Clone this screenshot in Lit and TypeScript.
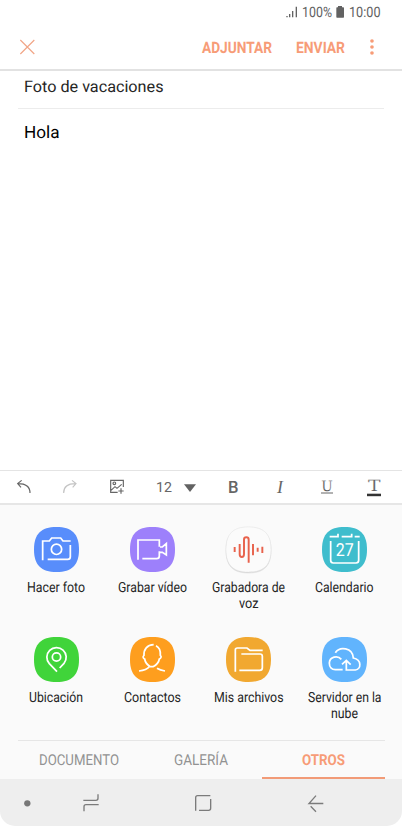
import { LitElement, html, svg, css } from "lit";
import { customElement } from "lit/decorators.js";

// Text set to an exact advance width, which gives the condensed Samsung look.
const fit = (text: string, width: number, size: number, cls = "", baseline = 15) => html`
  <svg class="fit ${cls}" width=${width} height="20">
    <text x="0" y=${baseline} font-size=${size} textLength=${width} lengthAdjust="spacingAndGlyphs">${text}</text>
  </svg>`;

// Line icon drawn on a grid of three units per pixel.
const icon = (box: [number, number, number, number], body: unknown, cls = "") => html`
  <svg class="line ${cls}" width=${box[2] / 3} height=${box[3] / 3} viewBox=${box.join(" ")}>${body}</svg>`;

const SQUIRCLE = "M67.5 0C114 0 135 21 135 67.5S114 135 67.5 135 0 114 0 67.5 21 0 67.5 0Z";

interface App {
  color: string;
  origin: [number, number];
  art: unknown;
  lines: [string, number][];
  cls?: string;
}

const apps: App[] = [
  {
    color: "#588dfb", origin: [100, 37], lines: [["Hacer foto", 58]],
    art: svg`<path d="M126 137V79H146L153 70H180L187 79H210M209 91V126q0 8-8 8H141"/><circle cx="167.500" cy="104" r="15.500"/>`,
  },
  {
    color: "#9d80fb", origin: [390, 37], lines: [["Grabar vídeo", 69]],
    art: svg`<path d="M414 135V76H478V96M478 110V124q0 8-8 8H427M480 97H487L499 87V121L487 113H477"/>`,
  },
  {
    color: "#fbfbfb", origin: [79, 37], lines: [["Grabadora de", 73], ["voz", 19.5]], cls: "voice",
    art: svg`<path d="M105 97V112M120 88V119q0 8 6.500 8t6.500-8V75q0-7 7-7t7 7V144M160 88V122M174 99V111M188 96V115"/>`,
  },
  {
    color: "#3fbdcd", origin: [367, 37], lines: [["Calendario", 58.5]],
    art: svg`<path d="M390 66H415V57M426 66H456V57M465 66H480M393 79V137q0 8 8 8H469q8 0 8-8V79"/>
      <text class="day" x="408" y="125" font-size="54" textLength="54" lengthAdjust="spacingAndGlyphs">27</text>`,
  },
  {
    color: "#40d43a", origin: [100, 34], lines: [["Ubicación", 54]],
    art: svg`<path d="M169 138L146 114A29 29 0 1 1 190 113L177 127"/><circle cx="167.500" cy="94" r="12.500"/>`,
  },
  {
    color: "#fe9e1e", origin: [390, 34], lines: [["Contactos", 57]],
    art: svg`<path d="M461 57C441 58 431 71 432 89C427 93 430 99 434 100C436 112 443 118 449 122C442 131 431 135 417 136M468 60C480 66 482 77 481 89C486 93 482 99 478 100C476 112 467 119 459 123H449M471 128Q480 134 495 136"/>`,
  },
  {
    color: "#f1a830", origin: [78, 34], lines: [["Mis archivos", 69.5]],
    art: svg`<path d="M106 138V73q0-6 6-6H141L150 74H188M124 85H180q7 0 7 7V126q0 8-8 8H118"/>`,
  },
  {
    color: "#61b4fd", origin: [367, 34], lines: [["Servidor en la", 73.5], ["nube", 27]],
    art: svg`<path d="M425 101C414 88 390 93 389 112C389 124 396 132 407 132H429M427 116L440 104L453 117M440 104V133H467C485 131 487 102 461 97C459 65 420 61 407 81"/>`,
  },
];

@customElement("app-root")
export class AppRoot extends LitElement {
  static styles = css`
    :host { display: flex; flex-direction: column; width: 402px; height: 826px; background: #fff;
      font-family: Roboto, "Liberation Sans", sans-serif; overflow: hidden; }
    * { box-sizing: border-box; }
    svg { display: block; flex: none; overflow: visible; }
    text { text-rendering: geometricPrecision; }
    .fit { fill: #252525; }
    .fit.status { fill: #626262; }
    .fit.accent { fill: #f79c77; font-weight: 700; }
    .fit.muted { fill: #929292; }
    .line { fill: none; stroke: #666; stroke-width: 3.5; }
    .statusbar { height: 24px; display: flex; align-items: center; justify-content: flex-end; padding-right: 21.5px; }
    .solid { fill: #626262; stroke: none; }
    .signal { margin-right: 4.5px; }
    .battery { margin: 0 4.5px 0 4px; }
    .header { height: 47px; border-bottom: 2px solid #e2e2e2; display: flex; align-items: center; padding: 1px 27.5px 0 20px; }
    .close { stroke: #f1a586; }
    .send { margin: 0 24.5px 0 24px; }
    .push { margin-left: auto; }
    .dots { fill: #f79c77; stroke: none; }
    .subject { height: 38px; margin: 0 18px; padding: 6px 0 0 6.4px; border-bottom: 1px solid #ececec; }
    .body { flex: 1; padding: 14px 23.6px; }
    .body .fit { fill: #000; }
    .toolbar { height: 35px; display: flex; border-top: 1px solid #e4e4e4; border-bottom: 2px solid #e6e6e6; }
    .tool { width: 47px; display: flex; align-items: center; justify-content: center; }
    .tool.redo { width: 45px; }
    .tool.image { width: 50px; }
    .tool.size { width: 44px; }
    .tool.drop { width: 23.5px; justify-content: flex-start; margin: 0 2px 0 -2px; padding-top: 2px; }
    .faint { stroke: #c4c4c4; }
    .fit.fmt { fill: #666; }
    .bold { font-weight: 500; }
    .serif { font-family: "DejaVu Serif", "Liberation Serif", serif; }
    .serif text { fill: #5c5c5c; stroke: #fff; stroke-width: .15; }
    .ital { font-family: "Liberation Serif", serif; font-style: italic; }
    .panel { height: 274px; background: #fafafa; display: flex; flex-direction: column; }
    .grid { height: 235px; display: grid; grid-template-columns: repeat(4, 1fr); grid-template-rows: 109.5px 1fr; padding: 22px 9.2px 0 7.9px; }
    .app { display: flex; flex-direction: column; align-items: center; }
    .names { display: flex; flex-direction: column; align-items: center; padding-top: 5px; }
    .names .fit { height: 16px; }
    .tile { stroke: none; }
    .art { stroke: #fff; stroke-width: 5.2; }
    .voice .art { stroke: #e8624c; stroke-width: 5.8; }
    .voice .tile { stroke: #e6e6e6; stroke-width: 1.5; filter: drop-shadow(0 2px 1px #ccc); }
    .day { fill: #fff; stroke: none; }
    .tabs { flex: 1; margin: 0 17px 0 18px; border-top: 1px solid #e6e6e6; display: grid; grid-template-columns: 122px 122px 1fr; }
    .tab { display: flex; justify-content: center; align-items: center; border-bottom: 2px solid transparent; padding-top: 1px; }
    .tab.on { border-color: #f29b77; }
    .navwrap { height: 47px; background: #fff; }
    .nav { height: 47px; background: #eee; border-radius: 0 0 15px 15px; display: flex; align-items: center; padding: 1px 0 0 24px; }
    .nav .line { stroke: #7b7b7b; stroke-width: 4; }
    .nav .dot { fill: #777; stroke: none; }
    .recent { margin-left: 52px; }
    .home { margin-left: 96px; }
    .back { margin-left: 96.6px; }
  `;

  render() {
    return html`
      <div class="statusbar">
        ${icon([258, 18, 35, 35], svg`<path d="M259 48h4v4h-4zM267 42h4v10h-4zM276 33h4v19h-4zM287 20h4v32h-4z"/>`, "solid signal")}
        ${fit("100%", 30, 14.3, "status")}
        ${icon([409, 17, 25, 35], svg`<path d="M415 17h12v4h4q2 0 2 2v27q0 2-2 2h-19q-2 0-2-2V23q0-2 2-2h3z"/>`, "solid battery")}
        ${fit("10:00", 31.5, 14.3, "status")}
      </div>
      <div class="header">
        ${icon([60, 120, 44, 42], svg`<path d="M61 120L103 162M103 120L61 162"/>`, "close")}
        <span class="push"></span>
        ${fit("ADJUNTAR", 70, 15.7, "accent", 15.8)}
        ${fit("ENVIAR", 49, 15.7, "accent send", 15.8)}
        ${icon([509, 116, 15, 48], svg`<circle cx="515" cy="122" r="5.500"/><circle cx="515" cy="140" r="5.500"/><circle cx="515" cy="158" r="5.500"/>`, "dots")}
      </div>
      <div class="subject">${fit("Foto de vacaciones", 139.5, 16)}</div>
      <div class="body">${fit("Hola", 35.6, 17, "", 15.4)}</div>
      <div class="toolbar">
        <div class="tool">${icon([50, 46, 42, 40], svg`<path d="M89 85C89 68 80 57 53 57M64 47L52 57L62 68"/>`)}</div>
        <div class="tool redo">${icon([189, 46, 40, 40], svg`<path d="M191 85C191 68 200 57 226 57M216 47L228 57L218 68"/>`, "faint")}</div>
        <div class="tool image">${icon([330, 46, 42, 42], svg`<path d="M370 67V47H332V83H353M333 77L345 66L351 71L365 59M355 79H371M363 71V87"/><circle cx="343" cy="56" r="4"/>`)}</div>
        <div class="tool size">${fit("12", 16, 14, "fmt")}</div>
        <div class="tool drop">${icon([552, 58, 36, 24], svg`<path d="M552 59H588L570 82Z"/>`, "solid")}</div>
        <div class="tool">${fit("B", 10.5, 17, "fmt bold", 15.9)}</div>
        <div class="tool">${fit("I", 6, 18.5, "fmt ital", 16)}</div>
        <div class="tool">
          <svg class="fit fmt serif" width="12" height="20">
            <text x="0.300" y="13.500" font-size="14.500" textLength="11.500" lengthAdjust="spacingAndGlyphs">U</text>
            <rect x="0" y="15.500" width="12" height="1"/>
          </svg>
        </div>
        <div class="tool">
          <svg class="fit fmt serif" width="15" height="20">
            <text x="1" y="13.500" font-size="15.500" textLength="12.500" lengthAdjust="spacingAndGlyphs">T</text>
            <rect x="0" y="16.700" width="14" height="2.500" fill="#333"/>
          </svg>
        </div>
      </div>
      <div class="panel">
        <div class="grid">
          ${apps.map((a) => html`
            <div class="app ${a.cls ?? ""}">
              ${icon([0, 0, 135, 135], svg`<path class="tile" d=${SQUIRCLE} fill=${a.color}/>
                <g class="art" transform="translate(${-a.origin[0]} ${-a.origin[1]})">${a.art}</g>`)}
              <div class="names">${a.lines.map(([t, w]) => fit(t, w, 14))}</div>
            </div>`)}
        </div>
        <div class="tabs">
          <div class="tab">${fit("DOCUMENTO", 80, 15, "muted")}</div>
          <div class="tab">${fit("GALERÍA", 54, 15, "muted")}</div>
          <div class="tab on">${fit("OTROS", 43, 15, "accent")}</div>
        </div>
      </div>
      <div class="navwrap"><div class="nav">
        ${icon([72, 210, 20, 20], svg`<circle class="dot" cx="82" cy="220" r="9.500"/>`)}
        ${icon([248, 194, 48, 52], svg`<path d="M249 213H287q6 0 6-6V195M295 226H257q-6 0-6 6V246"/>`, "recent")}
        ${icon([585, 196, 49, 49], svg`<path d="M587 243V204q0-6 6-6H631M632 208V236q0 6-6 6H597"/>`, "home")}
        ${icon([324, 194, 47, 51], svg`<path d="M370 219.500H327L348 196M332 228L348 244"/>`, "back")}
      </div></div>
    `;
  }
}
